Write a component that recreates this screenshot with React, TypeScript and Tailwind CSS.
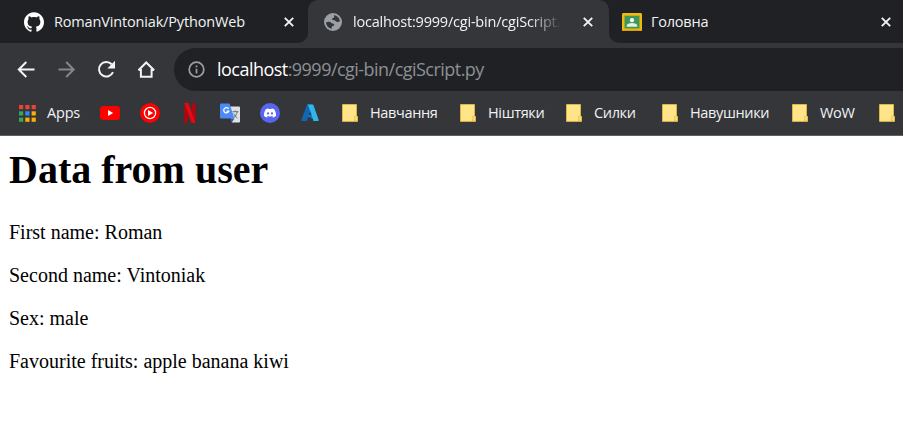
import React from "react";
import { SiGithub, SiDiscord } from "react-icons/si";

const uiFont = "font-['Open_Sans','Noto_Sans',sans-serif]";

function CloseIcon() {
  return (
    <svg className="size-[10px] shrink-0" viewBox="0 0 10 10" fill="none" stroke="#f1f3f4" strokeWidth="1.9">
      <path d="M0.8 0.8 9.2 9.2M9.2 0.8 0.8 9.2" />
    </svg>
  );
}

function GlobeIcon() {
  return (
    <svg className="size-[18px] shrink-0" viewBox="0 0 18 18">
      <circle cx="9" cy="9" r="9" fill="#9aa0a6" />
      <path
        d="M9.800 2.200C12.500 2.200 15.600 4.700 15.900 8.200c-1.600 1-3.700.9-4.400-.3-.5-.8-1.900-.3-2.900-.8-1-.6-.5-1.700.6-2C10.200 4.800 10.500 3.400 9.800 2.200z"
        fill="#35363a"
      />
      <path
        d="M2.100 9.200c1.500-.8 4.300-.7 5 .5.500.9 2.500.3 3 1.500.5 1.100-.7 1.700-1.700 2-.9.300-.9 1.500-.4 2.600C4.600 15.300 2.200 12.700 2.100 9.200z"
        fill="#35363a"
      />
    </svg>
  );
}

function ClassroomIcon() {
  return (
    <svg className="h-[18px] w-5" viewBox="0 0 20 18">
      <rect width="20" height="18" rx="1.4" fill="#f5b80c" />
      <path d="M2.500 2.700h15v12.800h-15z" fill="#41975a" />
      <circle cx="10" cy="7.200" r="2.100" fill="#f7faf7" />
      <path d="M4.800 13.800v-1.300c0-1.400 2.100-2.400 5.200-2.400s5.200 1 5.200 2.400v1.300z" fill="#e3eee5" />
      <path d="M0 16.900h20V18H0z" fill="#d99b0c" />
    </svg>
  );
}

function TabBar() {
  return (
    <header className="flex h-[43px] bg-[#202124] text-[14.5px] text-[#f1f3f4]">
      <div className="flex w-[308px] shrink-0 bg-[#35363a]">
        <div className="flex flex-1 items-center rounded-br-[10px] bg-[#202124] pl-6 pr-[14px]">
          <SiGithub className="size-5 shrink-0 text-white" />
          <span className="ml-[10px] w-[194px] whitespace-nowrap tracking-[-0.16px]">RomanVintoniak/PythonWeb</span>
          <span className="ml-auto flex"><CloseIcon /></span>
        </div>
      </div>
      <div className="flex w-[301px] shrink-0 bg-[#202124]">
        <div className="flex flex-1 items-center rounded-t-[10px] bg-[#35363a] pl-4 pr-4">
          <GlobeIcon />
          <span className="ml-[11px] whitespace-nowrap tracking-[-0.2px] [mask-image:linear-gradient(to_right,black_85%,transparent_101%)]">
            localhost:9999/cgi-bin/cgiScript.
          </span>
          <span className="ml-auto flex"><CloseIcon /></span>
        </div>
      </div>
      <div className="flex flex-1 bg-[#35363a]">
        <div className="flex flex-1 items-center rounded-bl-[10px] bg-[#202124] pl-[13px] pr-[12px]">
          <ClassroomIcon />
          <span className="ml-[9px] whitespace-nowrap tracking-[-0.23px]">Головна</span>
          <span className="ml-auto flex"><CloseIcon /></span>
        </div>
      </div>
    </header>
  );
}

function Toolbar() {
  return (
    <div className="flex h-12 bg-[#35363a] pt-[5px]">
      <div className="flex h-[43px] w-[174px] shrink-0 items-center gap-5 pl-4">
        <svg className="size-5" viewBox="0 0 20 20" fill="none" stroke="#f1f3f4" strokeWidth="2">
          <path d="M18.500 9.500H3.200M10.300 2 2.800 9.500l7.500 7.500" />
        </svg>
        <svg className="size-5" viewBox="0 0 20 20" fill="none" stroke="#85868a" strokeWidth="2">
          <path d="M2.500 9.500h15.300M10.200 2l7.500 7.500-7.500 7.500" />
        </svg>
        <svg className="size-5" viewBox="0 0 20 20" fill="none">
          <path d="M17 12.200A7.300 7.300 0 1 1 15.700 4.300" stroke="#f1f3f4" strokeWidth="2" />
          <path d="M19 .8v7.700h-7.700z" fill="#f1f3f4" />
        </svg>
        <svg className="size-5" viewBox="0 0 20 20" fill="none" stroke="#f1f3f4" strokeWidth="2">
          <path d="M2.500 10h2.400v6.800h10.700V10h2.500M2.500 10.300 10.200 2.500l7.900 7.800" />
        </svg>
      </div>
      <div className="flex h-[43px] flex-1 items-center rounded-l-[22px] bg-[#202124] pl-[14px]">
        <svg className="size-[17px]" viewBox="0 0 17 17" fill="none" stroke="#9aa0a6" strokeWidth="1.700">
          <circle cx="8.500" cy="8.500" r="7.300" />
          <path d="M8.500 7.800v4.600M8.500 4.500v1.700" />
        </svg>
        <span className="ml-3 whitespace-nowrap text-[18px] tracking-[-0.53px] text-[#8c9095]">
          <span className="text-white">localhost</span>:9999/cgi-bin/cgiScript.py
        </span>
      </div>
    </div>
  );
}

const appColors = ["#ea4335", "#ea4335", "#ea4335", "#34a853", "#2b8cf5", "#fbb005", "#34a853", "#fbb005", "#fbb005"];

function AppsIcon() {
  return (
    <svg className="h-[17px] w-[17px]" viewBox="0 0 17 17">
      {appColors.map((color, i) => (
        <rect key={i} x={(i % 3) * 6.300} y={Math.floor(i / 3) * 6.300} width="4.200" height="4.200" fill={color} />
      ))}
    </svg>
  );
}

function FolderIcon() {
  return (
    <svg className="h-[18px] w-4 shrink-0" viewBox="0 0 16 18">
      <path d="M.5.500h14v11.300l1 .6v5H.5z" fill="#ffe48a" stroke="#dbb743" />
      <path d="M12.700 17v-4.600l1.500-.5 1.200.8V17z" fill="#ffe083" stroke="#dcb63e" strokeWidth=".7" />
    </svg>
  );
}

function FaviconRow() {
  return (
    <div className="flex items-center gap-5">
      <svg className="h-[14px] w-5" viewBox="0 0 20 14">
        <rect width="20" height="14" rx="3.500" fill="#f00" />
        <path d="m8 4 5.200 3L8 10z" fill="#fff" />
      </svg>
      <svg className="size-5" viewBox="0 0 20 20">
        <circle cx="10" cy="10" r="10" fill="#f00" />
        <circle cx="10" cy="10" r="5.600" fill="none" stroke="#fff" strokeWidth="1.300" />
        <path d="m8 6.900 5.200 3.100L8 13.100z" fill="#fff" />
      </svg>
      <svg className="size-5" viewBox="0 0 20 20">
        <path d="M4.300 0h3.900v19.500l-3.900.5zM11.700 0h3.900v20l-3.900-.5z" fill="#b1060f" />
        <path d="M4.300 0h4.100l7.200 20-4.100-.5z" fill="#e50914" />
      </svg>
      <svg className="size-5" viewBox="0 0 20 20">
        <path d="M8 3.500h11q1 0 1 1V18.500q0 1-1 1h-7z" fill="#dfe1e3" />
        <path d="M1 .5h8.500l4.900 15H1q-1 0-1-1v-13q0-1 1-1z" fill="#4c8bf5" />
        <path d="m10.500 15.500 4 0-2.800 4z" fill="#3158ba" />
        <path d="M8.600 6A2.600 2.600 0 1 0 8.800 8.100H6.500" fill="none" stroke="#fff" strokeWidth="1.300" />
        <path d="M12.500 8.700h6M15.300 7.500v1.300M17.200 8.800c-.5 2.600-1.600 4.300-3.200 5.500M13.700 10.500c.7 1.800 2 3.400 3.800 4.700" fill="none" stroke="#62727b" />
      </svg>
      <span className="flex size-5 items-center justify-center rounded-full bg-[#5865f2]">
        <SiDiscord className="size-3 text-white" />
      </span>
      <svg className="size-5" viewBox="0 0 20 20">
        <path d="M7.200 1.500h5.300L6.800 18H2Q1 18 1.300 17z" fill="#1267b4" />
        <path d="M6.500 12h7.700l2 6-9-5z" fill="#0078d4" />
        <path d="M7.200 1.500h5.300q.8 0 1 .8L18.700 17q.3 1-.7 1h-5.200q.8 0 .5-1L8.200 2.300z" fill="#32b5eb" />
      </svg>
    </div>
  );
}

function Bookmark({ label, width }: { label: string; width: string }) {
  return (
    <div className={`flex shrink-0 items-center ${width}`}>
      <FolderIcon />
      <span className="ml-3 whitespace-nowrap tracking-[-0.35px]">{label}</span>
    </div>
  );
}

function BookmarksBar() {
  return (
    <nav className="flex h-[45px] items-center overflow-hidden border-b border-[#5f6064] bg-[#35363a] text-[14.5px] text-[#f1f3f4]">
      <div className="flex w-[100px] shrink-0 items-center pl-[19px]">
        <AppsIcon />
        <span className="ml-[11px] tracking-[-0.2px]">Apps</span>
      </div>
      <FaviconRow />
      <div className="ml-[22px] flex items-center">
        <Bookmark label="Навчання" width="w-[118px]" />
        <Bookmark label="Ніштяки" width="w-[106px]" />
        <Bookmark label="Силки" width="w-[96px]" />
        <Bookmark label="Навушники" width="w-[130px]" />
        <Bookmark label="WoW" width="w-[87px]" />
        <FolderIcon />
      </div>
    </nav>
  );
}

export default function App() {
  return (
    <div className={`h-[422px] w-[903px] overflow-hidden bg-white ${uiFont}`}>
      <TabBar />
      <Toolbar />
      <BookmarksBar />
      <main className="pl-[9px] pt-[11px] font-['Liberation_Serif',serif] text-[20px] leading-[23px] text-black">
        <h1 className="mb-7 text-[40px] font-bold leading-[46px]">Data from user</h1>
        <div className="flex flex-col gap-5">
          <p>First name: Roman</p>
          <p>Second name: Vintoniak</p>
          <p>Sex: male</p>
          <p>Favourite fruits: apple banana kiwi</p>
        </div>
      </main>
    </div>
  );
}
